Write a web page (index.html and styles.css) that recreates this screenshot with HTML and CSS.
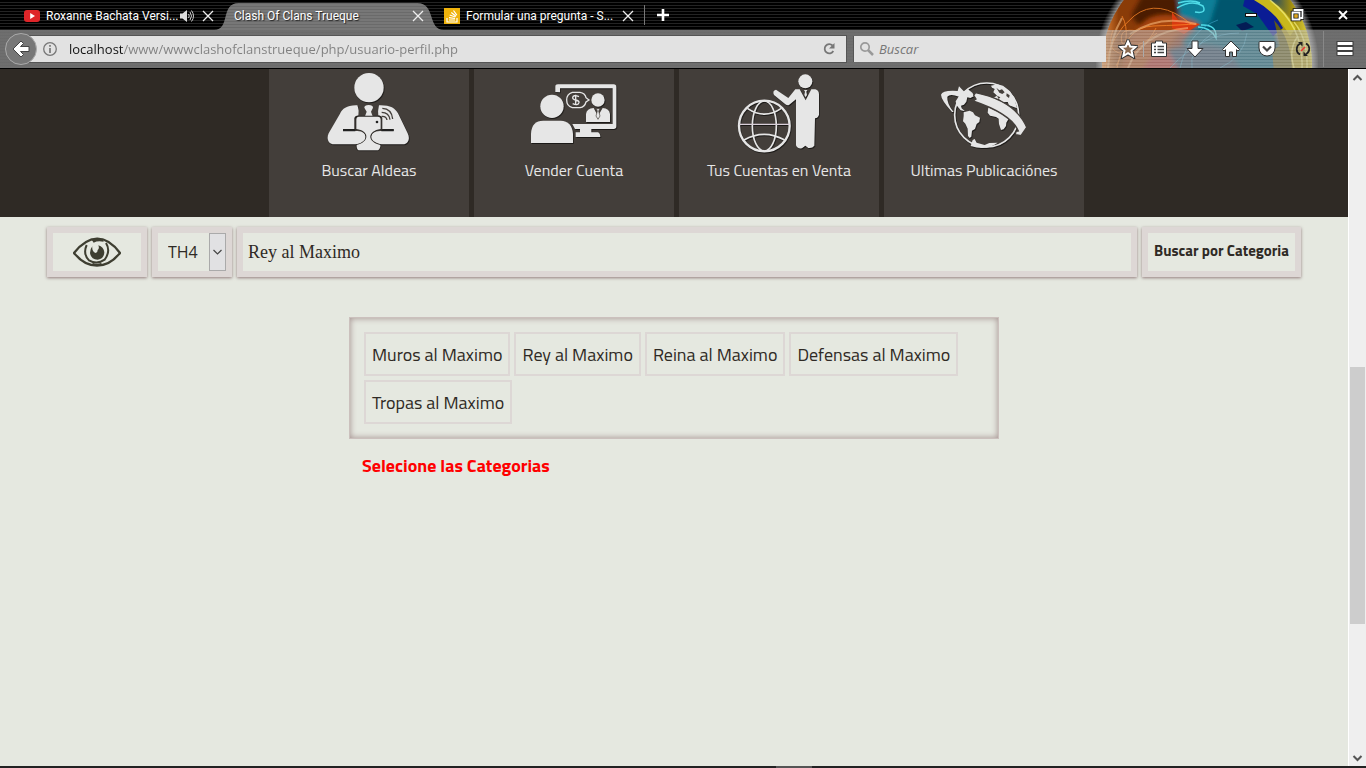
FILE: index.html
```html
<!DOCTYPE html>
<html lang="es">
<head>
<meta charset="utf-8">
<meta name="viewport" content="width=device-width, initial-scale=1">
<title>Clash Of Clans Trueque</title>
<link rel="stylesheet" href="styles.css">
</head>
<body>
<header class="browser">
  <svg class="orb" viewBox="1096 0 222 68" aria-hidden="true">
    <defs>
      <radialGradient id="halo"><stop offset="0.92" stop-color="#fff" stop-opacity=".65"/><stop offset="1" stop-color="#fff" stop-opacity="0"/></radialGradient>
      <linearGradient id="globe" x1="0" x2="1" y1="0" y2="0"><stop offset="0" stop-color="#e88a3a"/><stop offset=".08" stop-color="#8a3c08"/><stop offset=".28" stop-color="#8a3a08"/><stop offset=".4" stop-color="#7a3020"/><stop offset=".5" stop-color="#075a72"/><stop offset=".66" stop-color="#04546f"/><stop offset=".8" stop-color="#0a3c72"/><stop offset=".9" stop-color="#a08c10"/><stop offset="1" stop-color="#e6d840"/></linearGradient>
      <filter id="soft"><feGaussianBlur stdDeviation="2"/></filter>
      <clipPath id="disc"><circle cx="1207" cy="64" r="105"/></clipPath>
    </defs>
    <circle cx="1207" cy="64" r="112" fill="url(#halo)"/>
    <circle cx="1207" cy="64" r="105" fill="url(#globe)"/>
    <g clip-path="url(#disc)">
      <g filter="url(#soft)">
        <path d="M1178 -4h80l20 24-4 52h-76l-16-30 18-18z" fill="#04566e"/>
        <path d="M1178 -4h40l-8 26-14 8-16-10z" fill="#0a7f98"/>
        <path d="M1142 -4h34l4 20-26 10q-20 2-22-12z" fill="#4c1c04"/>
        <path d="M1150 18q20-8 50 6l-24 12-30 34h-24q2-36 28-52z" fill="#a8440c"/>
        <path d="M1142 72q8-20 24-20l18 20z" fill="#a92a24"/>
        <path d="M1168 50q30-10 60 0l14 22h-64z" fill="#28425c"/>
        <path d="M1262 -4q42 22 50 76h-24q0-38-40-72z" fill="#a89414"/>
      </g>
      <path d="M1172 12l6 8 22 4-16 10-12-6z" fill="#d83a10"/>
      <path d="M1245 -2h20l18 30-10 8-16-22-14-8z" fill="#0a1c94"/>
      <path d="M1236 25l10-3 8 5-12 4z" fill="#041d55"/>
      <path d="M1262 -4q22 10 34 32l-6 8q-14-24-36-36z" fill="#c8b81c"/>
      <path d="M1274 20q18 20 18 52h-18l-2-22 8-4z" fill="#5f5a18"/>
      <g fill="none" stroke="#ff8a2a" stroke-width="1" opacity=".75">
        <path d="M1105 68q5-33 29-52t57 8M1117 68q8-41 36-42t44-2M1113 30q-8 21 10 24t33-26M1137 31q-19-4-15 12 13 9 35-10M1122 16q11 20-6 50"/>
        <path stroke="#ffc98a" stroke-width="2" opacity=".7" d="M1122 18q-12 20-14 50M1130 34q30-20 66-10M1128 68q14-36 60-40"/>
      </g>
      <g fill="none" stroke="#4fdce8" stroke-width="1.500"><path d="M1177 8q15-9 26-2 4 8-8 6M1178 3q14-4 22 0M1201 25q16-1 15 13-6-11-18-11"/><path stroke="#3fa6cc" stroke-width="1" opacity=".6" d="M1180 68q9-38 38-48M1170 68q33-35 69-35M1192 68q-4-18 22-36M1220 68q24-11 27-35"/></g>
      <g fill="none" stroke="#f4ef80" stroke-width="1.500" opacity=".7"><path d="M1270 0q34 27 32 68M1294 22q14 17 13 46M1298 36q-10 13-4 32"/></g>
    </g>
  </svg>

  <nav class="tabs" aria-label="Pestañas">
    <div class="tab first">
      <svg width="16" height="16" viewBox="0 0 16 16"><rect y="2" width="16" height="12" rx="3" fill="#df2529"/><path d="M6.200 5l4.800 3-4.800 3z" fill="#fff"/></svg>
      <a class="tab-title" href="#">Roxanne Bachata Versi...</a>
      <button class="bare" aria-label="Silenciar"><svg width="14" height="16" viewBox="1 0 14 16"><path d="M1 5.500h2.500L8 2v12l-4.500-3.500H1z" fill="#ddd"/><path d="M9.500 6q1.500 2 0 4M11 4q3 4 0 8M12.500 2.500q4 5.500 0 11" fill="none" stroke="#ccc" stroke-width="1"/></svg></button>
      <button class="bare close" aria-label="Cerrar"><svg width="12" height="12" viewBox="0 0 12 12"><path d="M1 1l10 10M11 1L1 11" stroke="#eee" stroke-width="1.300"/></svg></button>
    </div>
    <div class="tab active">
      <svg class="tab-shape" viewBox="0 0 232 30" preserveAspectRatio="none" aria-hidden="true">
        <defs><pattern id="lines" width="4" height="3" patternUnits="userSpaceOnUse"><rect width="4" height="3" fill="#777"/><rect width="4" height="1" fill="#6a6a6a"/></pattern></defs>
        <path d="M0 30C17 30 6 3 25 3H205C224 3 215 30 232 30z" fill="url(#lines)"/>
      </svg>
      <a class="tab-title" href="#">Clash Of Clans Trueque</a>
      <button class="bare close" aria-label="Cerrar"><svg width="12" height="12" viewBox="0 0 12 12"><path d="M1 1l10 10M11 1L1 11" stroke="#eee" stroke-width="1.300"/></svg></button>
    </div>
    <div class="tab last">
      <svg width="16" height="16" viewBox="0 0 16 16"><rect width="16" height="16" fill="#efb20b"/><path d="M3 10v4h10v-4M5 12h6M5 9.700l6 .8M5.700 7l5.600 2M7.300 4.500l4.700 3.700M9.500 2.500l3.300 4.700" stroke="#fff" stroke-width="1.200" fill="none"/></svg>
      <a class="tab-title" href="#">Formular una pregunta - S...</a>
      <button class="bare close" aria-label="Cerrar"><svg width="12" height="12" viewBox="0 0 12 12"><path d="M1 1l10 10M11 1L1 11" stroke="#eee" stroke-width="1.300"/></svg></button>
    </div>
    <button class="bare new-tab" aria-label="Nueva pestaña"><svg width="14" height="14" viewBox="0 0 14 14"><path d="M7 1v12M1 7h12" stroke="#fff" stroke-width="2.600"/></svg></button>
    <div class="window-controls">
      <button class="bare" aria-label="Minimizar"><svg width="14" height="14" viewBox="0 0 14 14"><path d="M1 7h12" stroke="#111" stroke-width="4"/><path d="M2 7h10" stroke="#fff" stroke-width="2"/></svg></button>
      <button class="bare" aria-label="Restaurar"><svg width="14" height="14" viewBox="0 0 14 14"><g fill="none"><path d="M4.500 4V2h8v8h-2M2.500 4.500h7v7h-7z" stroke="#111" stroke-width="3.600"/><path d="M4.500 3V2h8v8h-2M2.500 4.500h7v7h-7z" stroke="#fff" stroke-width="1.800"/></g><path d="M4.500 6.500h3v3h-3z" fill="#e2a020"/></svg></button>
      <button class="bare" aria-label="Cerrar ventana"><svg width="14" height="14" viewBox="0 0 14 14"><path d="M3 3l8 8M11 3l-8 8" stroke="#fff" stroke-width="1.900"/></svg></button>
    </div>
  </nav>

  <div class="toolbar">
    <button class="back" aria-label="Atrás"><svg width="18" height="18" viewBox="0 0 18 18"><path d="M9 1L1 9l8 8 2.500-2.500L8.500 11.500H17v-5H8.500l3-3z" fill="#fff" stroke="#444"/></svg></button>
    <div class="url-box">
      <svg width="16" height="16" viewBox="0 0 16 16"><circle cx="8" cy="8" r="6.300" fill="none" stroke="#777" stroke-width="1.300"/><path d="M8 4v1.700M8 7v5" stroke="#777" stroke-width="1.700"/></svg>
      <input class="url" aria-label="Dirección" value="localhost/www/wwwclashofclanstrueque/php/usuario-perfil.php">
      <button class="bare" aria-label="Recargar"><svg width="14" height="14" viewBox="0 0 14 14"><path d="M10.500 3.500A4.600 4.600 0 1 0 11.300 9" fill="none" stroke="#777" stroke-width="1.800"/><path d="M12.500 1v5.500H7z" fill="#777"/></svg></button>
    </div>
    <div class="search-box">
      <svg width="16" height="16" viewBox="0 0 16 16"><circle cx="6" cy="6" r="4.200" fill="none" stroke="#999" stroke-width="1.700"/><path d="M9 9l5 5" stroke="#999" stroke-width="2.500"/></svg>
      <input class="search" type="search" aria-label="Buscar" placeholder="Buscar">
    </div>
    <div class="tools">
      <button class="bare" aria-label="Marcador"><svg width="20" height="20" viewBox="0 0 20 20"><path d="M10 2.500l2.200 5 5.300.5-4 3.600 1.200 5.400-4.700-2.900L5.300 17l1.200-5.400-4-3.600 5.300-.5z" fill="none" stroke="#333" stroke-width="4"/><path d="M10 2.500l2.200 5 5.300.5-4 3.600 1.200 5.400-4.700-2.900L5.300 17l1.200-5.400-4-3.600 5.300-.5z" fill="#8a6a50" stroke="#fff" stroke-width="2"/></svg></button>
      <span class="divider"></span>
      <button class="bare" aria-label="Lista"><svg width="20" height="20" viewBox="0 0 20 20"><path d="M2.500 4h4V2h7v2h4v13.500h-15z" fill="#fff" stroke="#333"/><path d="M5 7.500h2M8.500 7.500H15M5 10.500h2M8.500 10.500H15M5 13.500h2M8.500 13.500H15" stroke="#444" stroke-width="1.500"/></svg></button>
      <button class="bare spaced" aria-label="Descargas"><svg width="20" height="20" viewBox="0 0 20 20"><path d="M7 2h6v7.500h5L10 18 2 9.500h5z" fill="#fff" stroke="#333"/></svg></button>
      <button class="bare spaced" aria-label="Inicio"><svg width="20" height="20" viewBox="0 0 20 20"><path d="M10 2L1.500 10.500 3 12l1.500-1.300V17.500H8.500v-4.500h3v4.500h4v-6.800L17 12l1.500-1.500z" fill="#fff" stroke="#333"/></svg></button>
      <button class="bare spaced" aria-label="Pocket"><svg width="20" height="20" viewBox="0 0 20 20"><path d="M3 2.500h14q1 0 1 1V9a8 8 0 0 1-16 0V3.500q0-1 1-1z" fill="#fff" stroke="#333"/><path d="M6 7.500l4 4 4-4" fill="none" stroke="#444" stroke-width="2.200"/></svg></button>
      <button class="bare spaced" aria-label="Sincronizar"><svg width="20" height="20" viewBox="0 0 20 20"><path d="M7 15.500A6 6 0 0 1 7 4.800M13 4.500a6 6 0 0 1 0 10.700" fill="none" stroke="#222" stroke-width="1.700"/><path d="M5 3h4.500v4.500zM15 17h-4.500v-4.500z" fill="#222"/><path d="M8 12l4-4" stroke="#e33" stroke-width="1.500"/></svg></button>
      <span class="divider tall"></span>
      <button class="bare" aria-label="Menú"><svg width="20" height="20" viewBox="0 0 20 20"><path d="M1.500 4.500h17M1.500 9.500h17M1.500 14.500h17" stroke="#333" stroke-width="4.500"/><path d="M2.500 4.500h15M2.500 9.500h15M2.500 14.500h15" stroke="#fff" stroke-width="3"/></svg></button>
    </div>
  </div>
</header>

<div class="viewport">
  <main class="page">
    <nav class="cards" aria-label="Menú principal">
      <a class="card" href="#">
        <svg class="card-icon" viewBox="177 9 300 264" fill="#e6e6e6" aria-hidden="true">
          <g class="shade">
          <circle cx="327" cy="65" r="44"/>
          <path d="M292 118C260 117 248 128 240 143L206 202C198 219 206 235 222 235H292C326 235 326 195 292 195H249V189H283V157Q284 148 301 148z"/>
          <path d="M357 118C390 117 405 126 414 142L443 202C452 220 443 235 430 235H360C324 235 324 195 360 195H401V189H367V157Q367 149 352 148z"/></g>
          <path d="M249 190h37v6h-37zM364 190h37v6h-37z" fill="#222"/>
          <path d="M297 112l8 38h-10zM353 112l-8 38h10z" fill="#433e3a"/>
          <path d="M313 125q0-8 13-8t13 8l-6 12 5 14h-23l5-14z"/>
          <path d="M297 152h56q9 0 9 9v28c-40 6-42 38-1 48v5q-3 11-10 11h-52q-8 0-9-11v-5c40-10 38-43-1-48v-28q0-9 8-9z" stroke="#2a2724" stroke-width="5" paint-order="stroke"/>
          <circle cx="351" cy="168" r="4" fill="#222"/>
          <g fill="none" stroke="#433e3a" stroke-width="4"><path d="M365 151q14-1 16 11M365 139q22 0 25 22M367 127q28 1 31 32"/></g>
        </svg>
        <span>Buscar Aldeas</span>
      </a>
      <a class="card" href="#">
        <svg class="card-icon" viewBox="162 9 300 264" fill="#e6e6e6" aria-hidden="true">
          <g class="shade">
          <path d="M256 78V62q0-7 8-7h167q8 0 8 8v118q0 8-8 8h-67v10h20q7 3 7 14h-74v-14h13v-10h-15l-8-15h121V67H270v12z"/>
          <circle cx="246" cy="121" r="35"/>
          <path d="M183 231v-28q2-39 37-39h52q34 1 37 39v28z"/>
          <circle cx="384" cy="102" r="20"/>
          <path d="M348 168v-24q2-17 23-18l13 24 14-24q20 2 22 18v24z"/></g>
          <path d="M379 128h11l-4 7 4 15-6 10-6-10 4-15z" stroke="#433e3a" stroke-width="2"/>
          <path d="M307 79h23q15 2 18 16l9 7-9 6q-4 15-18 17h-23q-17-5-17-23t17-23z" fill="none" stroke="#e6e6e6" stroke-width="4"/>
          <path d="M327 92q-18-7-19 3 0 5 9 7 11 2 10 8-3 10-19 3M317 86v31" fill="none" stroke="#e6e6e6" stroke-width="4"/>
        </svg>
        <span>Vender Cuenta</span>
      </a>
      <a class="card" href="#">
        <svg class="card-icon" viewBox="162 9 300 264" fill="#e6e6e6" aria-hidden="true">
          <g class="shade">
          <g fill="none" stroke="#e6e6e6"><circle cx="268" cy="180" r="76" stroke-width="7"/><ellipse cx="268" cy="180" rx="36" ry="75" stroke-width="5"/><path d="M192 175H344" stroke="#d9cfd9" stroke-width="4"/><path d="M217 127q51 35 102 0M207 222q60-34 122 0" stroke-width="5"/></g>
          <circle cx="391" cy="46" r="21"/>
          <path d="M303 71L340 96 361 70H374L392 103 409 70H421Q432 73 432 85V146Q430 155 420 157L418 239Q412 248 400 246L391 239 381 247Q366 249 363 238V100L342 117Q337 119 331 115L297 87Q291 74 303 71z"/>
          <path d="M387 72h10l-3 5 2 10-4 7-4-7 2-10z"/></g>
        </svg>
        <span>Tus Cuentas en Venta</span>
      </a>
      <a class="card" href="#">
        <svg class="card-icon" viewBox="162 9 300 264" fill="#e6e6e6" aria-hidden="true">
          <g class="shade">
          <circle cx="320" cy="147" r="96" fill="none" stroke="#e6e6e6" stroke-width="5"/>
          <path d="M333 59l18-4 18 4 21 17 13 20 8 31-24-9-4-10-14 1-13-10-18-2 13-8-11-10 4-10-8-4z"/>
          <path d="M227 106q13-25 36-37l14 11 6 10-12 6-9-2-3 13-7 9-9 3 2 8 10 9-13-3-13-16z"/>
          <path d="M251 139l18-5 10 5 6 9 15 7-2 13-8 6-5 15-9 5-2 18-5 4-5-6-1-22-7-15-7-7 2-16z"/>
          <path d="M325 124l30 14 31 20-7 12-1 10-7 10-8 2-6-18-1-16-8-5-18-4-7-9z"/>
          <path d="M278 222l6-3 6 11 24 7 14-6 25-1q-34 26-81 10z"/>
          <path d="M216 138Q183 101 183 86 187 72 233 75l4-14 29 30-34 13 5-12q-27-10-35 0-2 20 19 46z"/></g>
          <path d="M287 80Q406 105 440 184L423 209 406 206 408 196 415 195Q393 143 279 105L288 99 281 88z" stroke="#433e3a" stroke-width="4"/>
          <path d="M349 65l9 8 8-3 8 9-7 5-9-4zM380 82l9 6-2 8-8-6zM351 89l10 5-5 5z" fill="#433e3a"/>
        </svg>
        <span>Ultimas Publicaciónes</span>
      </a>
    </nav>

    <form class="filters">
      <button class="field eye" type="button" aria-label="Ver">
        <svg width="48" height="30" viewBox="126 82 144 90" aria-hidden="true"><path d="M129 130Q162 88 198 87T267 130Q236 168 198 168T129 130z" fill="none" stroke="#3e3e31" stroke-width="7"/><path d="M180 87h36l2 9q-18-4-30 3zM180 167h36l-6-7q-12 5-24 0z" fill="#3e3e31"/><path d="M167 106q-12 27 7 46 24 14 47-2 19-26 4-50" fill="none" stroke="#3e3e31" stroke-width="6"/><path d="M184 110q-7 8-7 20 3 20 23 20 19-2 20-22-2-16-18-21 4 10-2 14 0 8-6 9-12-5-10-20z" fill="#3e3e31"/></svg>
      </button>
      <div class="field level">
        <select aria-label="Ayuntamiento"><option>TH4</option><option>TH5</option></select>
        <svg width="17" height="38" viewBox="0 0 17 38" aria-hidden="true"><rect x=".5" y=".5" width="16" height="37" fill="#e1e1e3" stroke="#aaa"/><path d="M4.500 17l4 4 4-4" fill="none" stroke="#444" stroke-width="1.200"/></svg>
      </div>
      <input class="field query" type="text" aria-label="Categoría" value="Rey al Maximo">
      <button class="field submit" type="button">Buscar por Categoria</button>
    </form>

    <section class="categories">
      <div class="tags">
        <button class="tag">Muros al Maximo</button>
        <button class="tag">Rey al Maximo</button>
        <button class="tag">Reina al Maximo</button>
        <button class="tag">Defensas al Maximo</button>
        <button class="tag">Tropas al Maximo</button>
      </div>
      <p class="notice">Selecione las Categorias</p>
    </section>
  </main>
  <div class="scrollbar" aria-hidden="true">
    <svg width="17" height="17" viewBox="0 0 17 17"><path d="M4.500 11l4-4 4 4" fill="none" stroke="#555" stroke-width="2"/></svg>
    <span class="above"></span><span class="thumb"></span><span class="below"></span>
    <svg width="17" height="17" viewBox="0 0 17 17"><path d="M4.500 7l4 4 4-4" fill="none" stroke="#555" stroke-width="2"/></svg>
  </div>
</div>
<div class="taskbar"><span></span></div>
</body>
</html>
```
FILE: styles.css
```css
* { box-sizing: border-box; }

body {
  margin: 0;
  min-height: 100vh;
  display: flex;
  flex-direction: column;
  background: #e5e8e0;
  font-family: "Titillium Web", Roboto, sans-serif;
  color: #2f2a25;
}

svg { display: block; flex: none; }
a { color: inherit; text-decoration: none; }
button, input, select { font: inherit; color: inherit; margin: 0; }

.bare {
  display: flex;
  padding: 0;
  border: 0;
  background: none;
}

/* Browser frame */
.browser {
  position: relative;
  border-bottom: 1px solid #000;
  background: repeating-linear-gradient(#000 0 2px, #242424 2px 3px);
  font-family: "Segoe UI", "Open Sans", sans-serif;
}

.orb {
  position: absolute;
  top: 0;
  right: 48px;
  width: 222px;
  height: 68px;
}

.tabs {
  position: relative;
  display: flex;
  align-items: center;
  height: 30px;
  color: #fff;
  font-family: Roboto, sans-serif;
  font-size: 12px;
}

.tab {
  position: relative;
  display: flex;
  align-items: center;
  gap: 6px;
  height: 30px;
  padding-top: 2px;
}

.tab > * { position: relative; }
.tab-title { flex: 1; min-width: 0; white-space: nowrap; }
.first { width: 214px; padding-left: 24px; }
.first .close { margin-left: 2px; }
.active { width: 230px; padding: 2px 20px 0; text-shadow: 1px 1px 1px #222; }
.last { width: 200px; padding-right: 10px; }

.tab > .tab-shape {
  position: absolute;
  top: 0;
  left: 0;
  width: 100%;
  height: 30px;
}

.new-tab {
  height: 20px;
  padding-left: 11px;
  align-items: center;
  border-left: 1px solid #777;
}

.window-controls {
  display: flex;
  gap: 32px;
  margin-left: auto;
  padding-right: 16px;
}

.toolbar {
  position: relative;
  display: flex;
  align-items: center;
  height: 38px;
  padding: 0 11px 0 5px;
  background: repeating-linear-gradient(rgba(190, 190, 190, .58) 0 2px, rgba(165, 165, 165, .55) 2px 3px);
}

.back {
  position: relative;
  z-index: 1;
  display: flex;
  align-items: center;
  justify-content: center;
  width: 32px;
  height: 32px;
  padding: 0;
  border: 1px solid #aaa;
  border-radius: 50%;
  background: #777;
}

.url-box, .search-box {
  display: flex;
  align-items: center;
  height: 26px;
  background: #e2e2e2;
}

.url-box {
  flex: 1;
  gap: 11px;
  margin-left: -8px;
  padding: 0 10px 0 13px;
  box-shadow: 0 0 0 1px #555;
}

.search-box {
  width: 252px;
  gap: 4px;
  margin-left: 8px;
  padding-left: 5px;
  color: #777;
  box-shadow: -1px 0 0 #555;
}

.url, .search {
  min-width: 0;
  flex: 1;
  padding: 0;
  border: 0;
  outline: 0;
  background: none;
  font-size: 13px;
}

.search::placeholder { color: #777; font-style: italic; opacity: 1; }

/* The host name is darker than the rest of the address */
.url {
  color: #808080;
  background: linear-gradient(90deg, #111 54px, #808080 54px);
  -webkit-background-clip: text;
  background-clip: text;
  -webkit-text-fill-color: transparent;
}

.tools { display: flex; align-items: center; margin-left: 12px; }
.spaced { margin-left: 16px; }
.divider { width: 1px; height: 16px; margin: 0 5px; background: #aaa; }
.divider.tall { height: 36px; margin: 0 11px 0 10px; background: #888; }

/* Page */
.viewport { flex: 1; display: flex; }
.page { flex: 1; min-width: 0; }

.cards {
  display: flex;
  justify-content: center;
  gap: 5px;
  padding-left: 5px;
  background: #2f2a25;
}

.card {
  display: flex;
  flex-direction: column;
  align-items: center;
  width: 200px;
  height: 148px;
  background: #433e3a;
  color: #e6e6e6;
  font-size: 16px;
  line-height: 26px;
}

.card-icon { width: 100px; height: 88px; }
.shade { filter: drop-shadow(2px 3px 1px #1b1917); }

.filters {
  display: flex;
  gap: 5px;
  padding: 10px 47px 0;
}

.field {
  height: 50px;
  border: 6px solid #ddd7d5;
  background: #e5e8e0;
  box-shadow: 0 1px 3px #927c7c;
}

.eye {
  display: flex;
  align-items: center;
  justify-content: center;
  width: 100px;
  padding: 0;
}

.level { display: flex; width: 80px; }

.level select {
  appearance: none;
  flex: 1;
  min-width: 0;
  padding: 0 0 0 10px;
  border: 0;
  background: none;
  font-family: "Segoe UI", "Open Sans", sans-serif;
  font-size: 16px;
}

.query {
  flex: 1;
  min-width: 0;
  padding: 0 5px;
  font-family: "Times New Roman", "Liberation Serif", serif;
  font-size: 18px;
}

.submit {
  width: 159px;
  padding: 0 0 4px;
  font-size: 15px;
  font-weight: 700;
  white-space: nowrap;
}

.categories {
  width: 650px;
  max-width: 100%;
  margin: 40px auto 0;
}

.tags {
  display: flex;
  flex-wrap: wrap;
  gap: 4px;
  padding: 14px;
  border: 1px solid #cbc0bd;
  box-shadow: inset 0 0 6px #a08c8a;
}

.tag {
  height: 44px;
  padding: 0 6px;
  border: 2px solid #ddd7d5;
  background: none;
  font-size: 18px;
}

.notice {
  margin: 14px 13px;
  color: #f00;
  font-size: 18px;
  font-weight: 700;
  line-height: 26px;
}

.scrollbar {
  display: flex;
  flex-direction: column;
  width: 18px;
  border-left: 1px solid #fff;
  background: #efefef;
}

.above { flex: 281; }
.thumb { flex: 257; margin: 0 1px; background: #cdcdcd; }
.below { flex: 125; }

.taskbar {
  display: flex;
  justify-content: center;
  height: 2px;
  padding-left: 222px;
  background: #222;
}

.taskbar span { width: 36px; background: #555; }
```
